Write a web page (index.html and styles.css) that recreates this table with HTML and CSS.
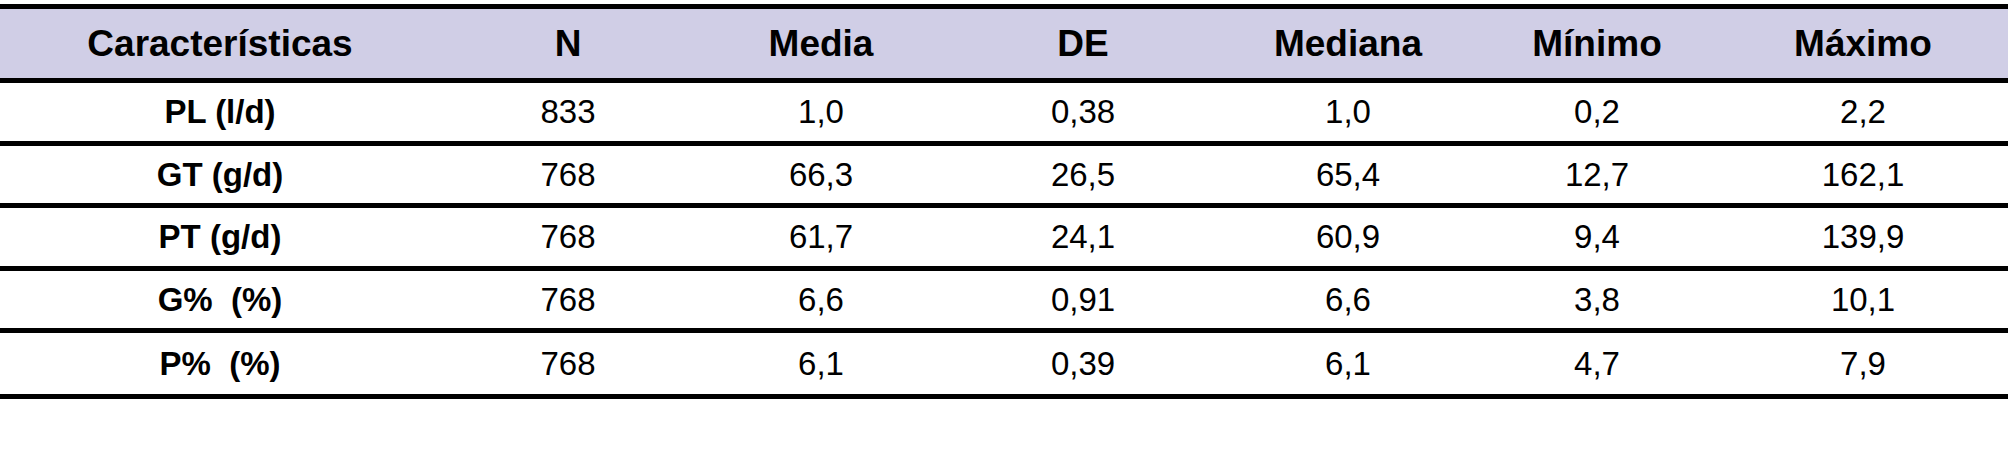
FILE: index.html
```html
<!DOCTYPE html>
<html lang="es">
<head>
<meta charset="utf-8">
<title>Características</title>
<link rel="stylesheet" href="styles.css">
</head>
<body>
<table class="stats">
  <colgroup>
    <col class="c1"><col class="c2"><col class="c3"><col class="c4"><col class="c5"><col class="c6"><col class="c7">
  </colgroup>
  <thead>
    <tr class="head">
      <th>Características</th><th>N</th><th>Media</th><th>DE</th><th>Mediana</th><th>Mínimo</th><th>Máximo</th>
    </tr>
  </thead>
  <tbody>
    <tr><th>PL (l/d)</th><td>833</td><td>1,0</td><td>0,38</td><td>1,0</td><td>0,2</td><td>2,2</td></tr>
    <tr><th>GT (g/d)</th><td>768</td><td>66,3</td><td>26,5</td><td>65,4</td><td>12,7</td><td>162,1</td></tr>
    <tr><th>PT (g/d)</th><td>768</td><td>61,7</td><td>24,1</td><td>60,9</td><td>9,4</td><td>139,9</td></tr>
    <tr><th>G%&nbsp; (%)</th><td>768</td><td>6,6</td><td>0,91</td><td>6,6</td><td>3,8</td><td>10,1</td></tr>
    <tr><th>P%&nbsp; (%)</th><td>768</td><td>6,1</td><td>0,39</td><td>6,1</td><td>4,7</td><td>7,9</td></tr>
  </tbody>
</table>
</body>
</html>
```

FILE: styles.css
```css
html, body {
  margin: 0;
  padding: 0;
  background: #ffffff;
}

body {
  padding-top: 4px;
  font-family: "Liberation Sans", Arial, sans-serif;
  color: #000000;
}

.stats {
  width: 2008px;
  border-collapse: collapse;
  table-layout: fixed;
}

.c1 { width: 440px; }
.c2 { width: 256px; }
.c3 { width: 250px; }
.c4 { width: 274px; }
.c5 { width: 256px; }
.c6 { width: 242px; }
.c7 { width: 290px; }

.stats th,
.stats td {
  padding: 0;
  text-align: center;
  vertical-align: middle;
  white-space: nowrap;
}

.stats tr {
  border-top: 5px solid #000000;
}

.stats tbody tr:last-child {
  border-bottom: 5px solid #000000;
}

.head {
  background: #d0cee6;
  height: 74px;
}

.head th {
  font-size: 37px;
  font-weight: bold;
}

.stats tbody tr {
  height: 63px;
}

.stats tbody tr:nth-child(even) {
  height: 62px;
}

.stats tbody tr:last-child {
  height: 66px;
}

.stats tbody th {
  font-size: 33px;
  font-weight: bold;
}

.stats tbody td {
  font-size: 33px;
  font-weight: normal;
}
```
